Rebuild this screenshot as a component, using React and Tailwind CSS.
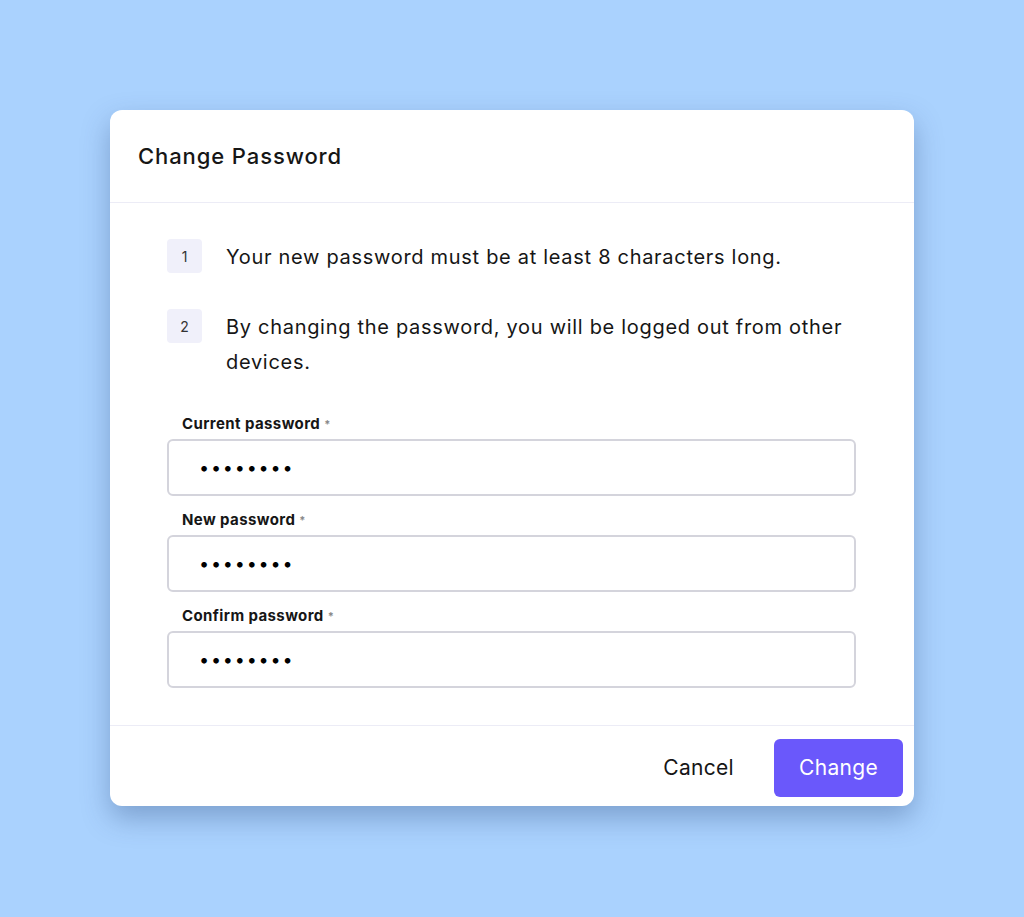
import { useState } from 'react';

const rules = [
  'Your new password must be at least 8 characters long.',
  'By changing the password, you will be logged out from other devices.',
];

const fields = [
  { id: 'current', label: 'Current password' },
  { id: 'new', label: 'New password' },
  { id: 'confirm', label: 'Confirm password' },
];

export default function App() {
  const [values, setValues] = useState({ current: '12345678', new: '12345678', confirm: '12345678' });

  return (
    <div
      className="min-h-[917px] w-full bg-[#aad2fe] pt-[110px] pl-[110px]"
      style={{ fontFamily: 'Inter, "Noto Sans", sans-serif' }}
    >
      <div className="w-[804px] h-[696px] bg-white rounded-[12px] shadow-[0_12px_28px_rgba(40,70,120,0.35)] flex flex-col">
        <div className="h-[93px] border-b border-[#ececf6] px-[28px] flex items-center">
          <h2 className="text-[22px] font-medium text-[#161616] tracking-[0.9px]">Change Password</h2>
        </div>

        <div className="flex-1 px-[57px] pt-[38px] border-b border-[#ececf6]">
          <ol className="flex flex-col gap-[36px]">
            {rules.map((r, i) => (
              <li key={i} className="flex gap-[24px]">
                <span className="shrink-0 w-[35px] h-[34px] -mt-[2px] rounded-[4px] bg-[#f0f0fa] text-[#333] text-[14px] flex items-center justify-center">
                  {i + 1}
                </span>
                <p className="text-[20px] leading-[35px] tracking-[0.7px] text-[#161616] pr-[10px] -mt-[1px]">{r}</p>
              </li>
            ))}
          </ol>

          <div className="mt-[33px] flex flex-col gap-[13px]">
            {fields.map((f) => (
              <div key={f.id}>
                <label htmlFor={f.id} className="block pl-[15px] text-[15px] font-bold text-[#161616] leading-[22px] tracking-[0.4px] mb-[4px]">
                  {f.label} <span className="text-[#888] text-[11px] align-top">*</span>
                </label>
                <input
                  id={f.id}
                  type="password"
                  value={values[f.id]}
                  onChange={(e) => setValues({ ...values, [f.id]: e.target.value })}
                  className="w-[689px] h-[57px] border-2 border-[#d4d4dc] rounded-[6px] px-[30px] text-[18px] tracking-[1.8px] text-black outline-none"
                />
              </div>
            ))}
          </div>
        </div>

        <div className="h-[80px] flex items-center justify-end gap-[40px] pr-[11px] pt-[3px]">
          <button className="text-[21px] text-[#161616] tracking-[0.3px]">Cancel</button>
          <button className="w-[129px] h-[58px] rounded-[6px] bg-[#6a58fb] text-white text-[21px] tracking-[0.3px]">Change</button>
        </div>
      </div>
    </div>
  );
}
